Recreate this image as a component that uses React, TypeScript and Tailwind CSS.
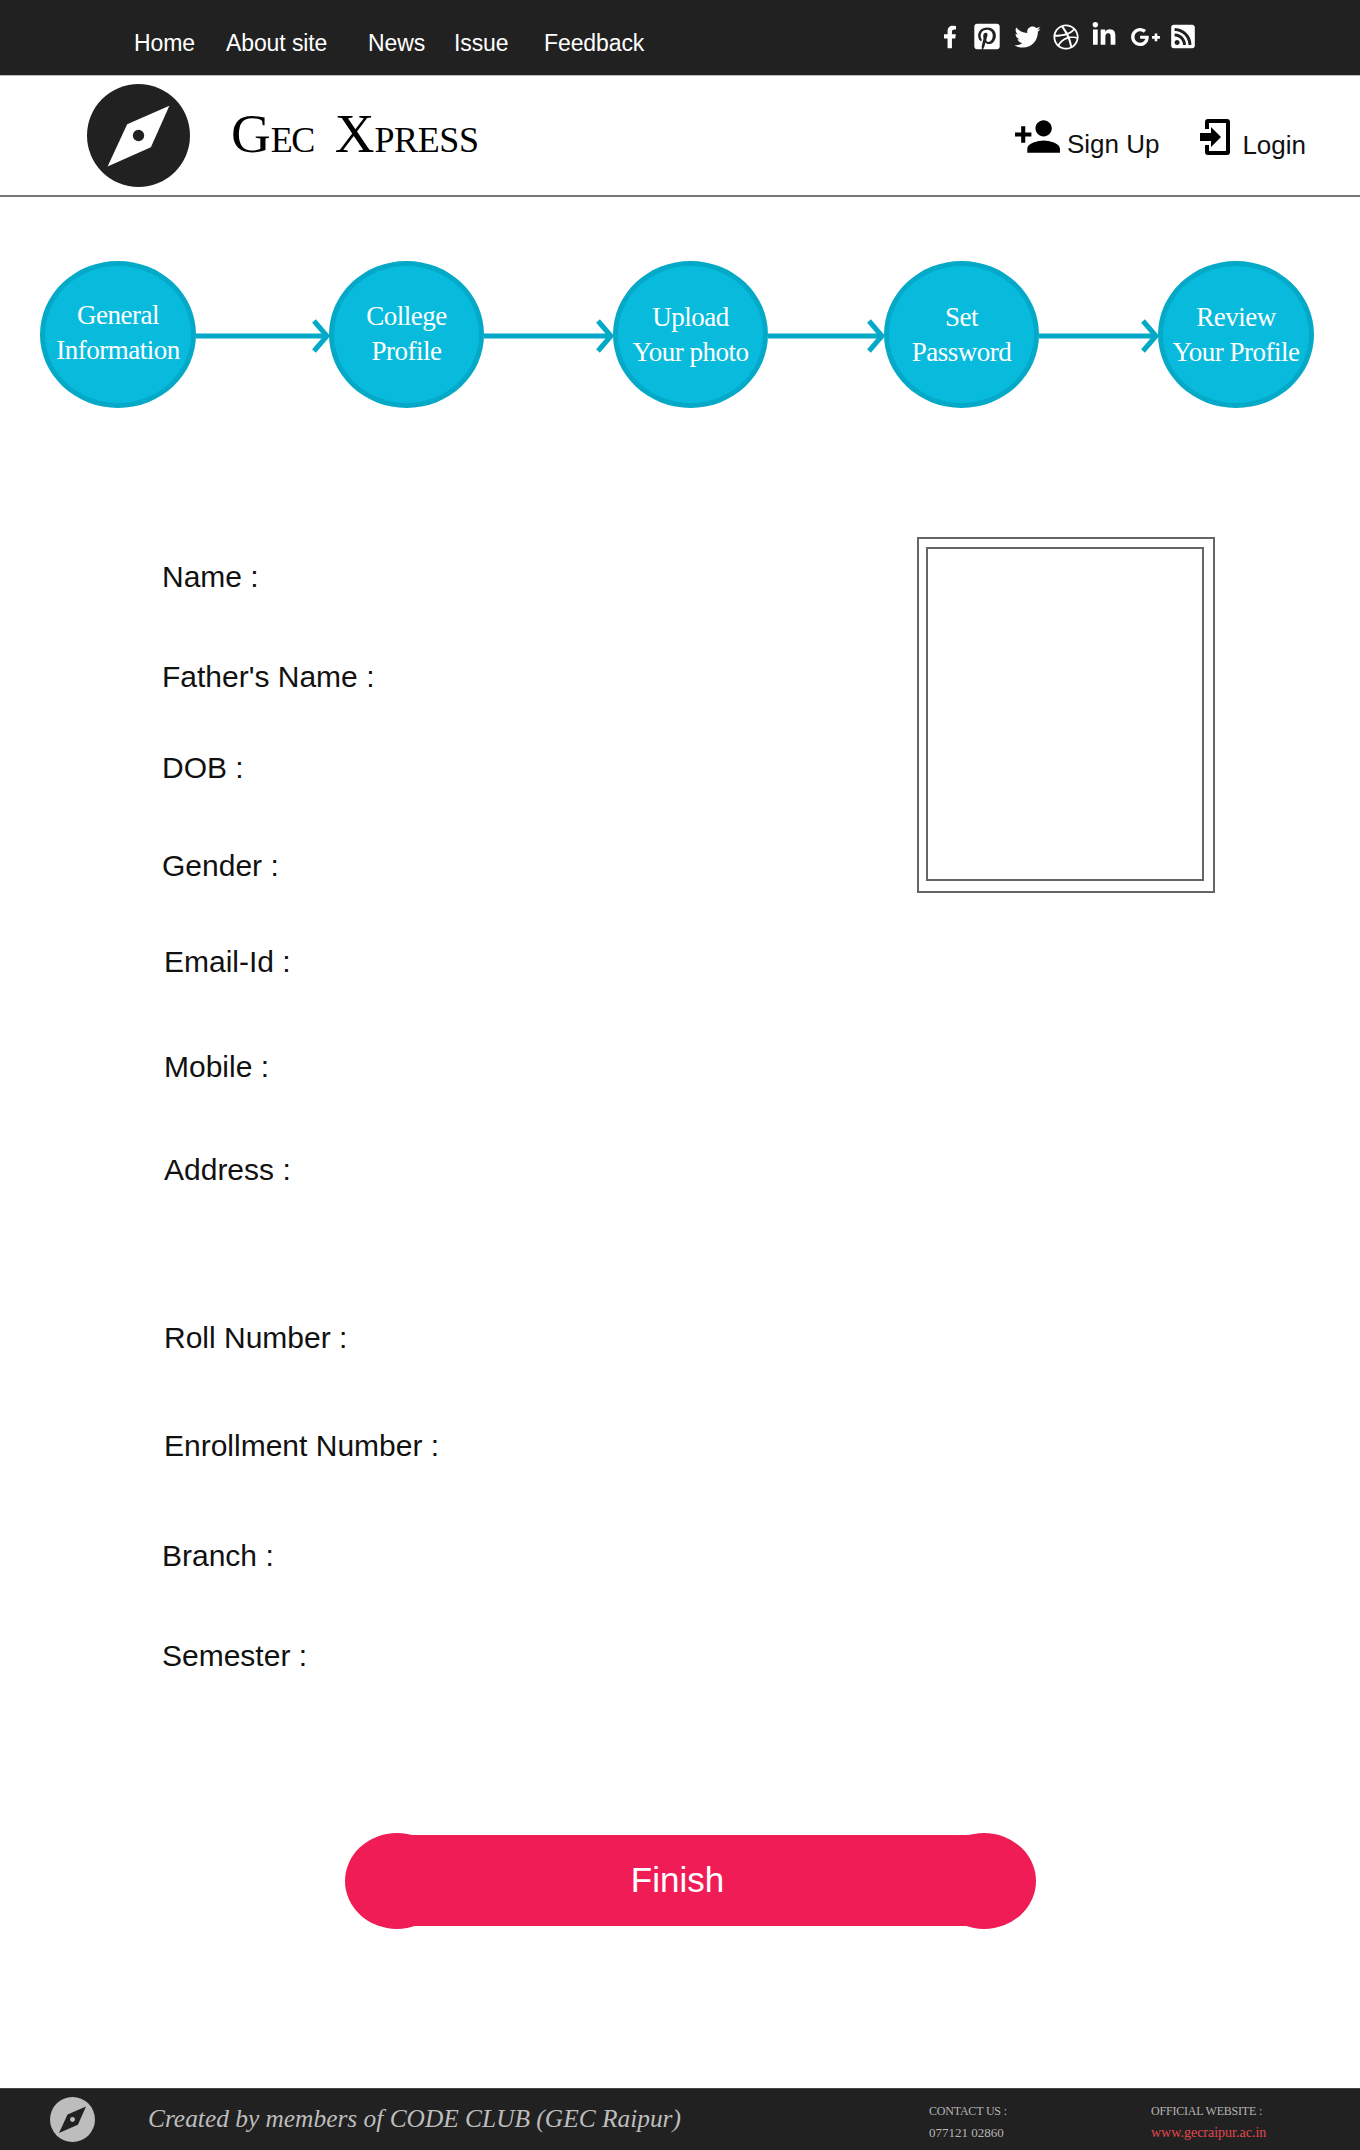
import React from "react";
import { FaDribbble, FaFacebookF, FaGooglePlusG, FaLinkedinIn, FaPinterestSquare, FaRssSquare, FaTwitter } from "react-icons/fa";
import { MdPersonAdd } from "react-icons/md";

function Compass({ bg, fg, className }: { bg: string; fg: string; className: string }) {
  return (
    <svg viewBox="0 0 100 100" preserveAspectRatio="none" className={className}>
      <ellipse cx="50" cy="50" rx="50" ry="50" fill={bg} />
      <polygon points="80,21 62,61.5 20,80 39,39" fill={fg} />
      <ellipse cx="50" cy="50" rx="5.5" ry="5.5" fill={bg} />
    </svg>
  );
}

function Step({ top, bottom, className }: { top: string; bottom: string; className: string }) {
  return (
    <div className={`flex h-[147px] shrink-0 flex-col items-center justify-center rounded-[50%] border-[5px] border-[#03a9c7] bg-[#08bbdd] font-['Liberation_Serif',serif] text-[27px] leading-[35px] tracking-[-0.5px] text-white ${className}`}>
      <span>{top}</span>
      <span>{bottom}</span>
    </div>
  );
}

function Arrow({ className, w }: { className: string; w: number }) {
  return (
    <svg viewBox={`0 0 ${w} 36`} className={className}>
      <line x1="0" y1="18" x2={w - 3} y2="18" stroke="#03a9c7" strokeWidth="5" />
      <polyline points={`${w - 15},3 ${w - 2},18 ${w - 15},33`} fill="none" stroke="#03a9c7" strokeWidth="5" />
    </svg>
  );
}

function Field({ label, className }: { label: string; className: string }) {
  return <div className={`h-[34px] text-[30px] leading-[34px] text-[#111] ${className}`}>{label}</div>;
}

export default function App() {
  return (
    <div className="flex h-[2150px] w-[1360px] flex-col overflow-hidden bg-white font-['Liberation_Sans',Arial,sans-serif]">
      {/* top nav */}
      <div className="flex h-[76px] shrink-0 border-b border-[#bdbdbd] bg-[#212121] text-white">
        <nav className="mt-[27px] flex h-[32px] w-[650px] shrink-0 whitespace-nowrap pl-[134px] text-[23px] leading-[32px] tracking-[-0.1px]">
          <a className="w-[92px]">Home</a>
          <a className="w-[142px]">About site</a>
          <a className="w-[86px]">News</a>
          <a className="w-[90px]">Issue</a>
          <a>Feedback</a>
        </nav>
        <div className="ml-[293px] mt-[24px] flex h-[25px] items-center">
          <FaFacebookF className="h-[24px] w-[14px]" />
          <FaPinterestSquare className="ml-[17px] h-[29px] w-[26px]" />
          <FaTwitter className="ml-[14px] h-[26px] w-[27px]" />
          <FaDribbble className="ml-[12px] h-[26px] w-[26px]" />
          <FaLinkedinIn className="ml-[12px] h-[26px] w-[26px] -translate-y-[2px]" />
          <FaGooglePlusG className="ml-[13px] h-[24px] w-[31px]" />
          <FaRssSquare className="ml-[10px] h-[27px] w-[24px]" />
        </div>
      </div>

      {/* logo bar */}
      <div className="flex h-[121px] shrink-0 items-start border-b-2 border-[#777]">
        <Compass bg="#212121" fg="#ffffff" className="ml-[87px] mt-[8px] h-[103px] w-[103px]" />
        <div className="ml-[41px] mt-[27px] whitespace-nowrap font-['Liberation_Serif',serif] leading-[62px] text-black">
          <span className="text-[55px]">G</span>
          <span className="text-[36px] tracking-[-1.5px]">EC</span>
          <span className="ml-[21px] text-[55px]">X</span>
          <span className="text-[36px] tracking-[-0.4px]">PRESS</span>
        </div>
        <div className="ml-auto mt-[44px] flex items-start pr-[54px] text-[26px] leading-[32px] text-[#111]">
          <MdPersonAdd className="h-[49px] w-[49px] -translate-y-[8px] text-black" />
          <span className="ml-[5px] mt-[8px]">Sign Up</span>
          <svg viewBox="0 0 30 36" className="ml-[41px] h-[36px] w-[30px] -translate-y-[1px]">
            <path d="M7 10V3a1 1 0 0 1 1-1h19a1 1 0 0 1 1 1v30a1 1 0 0 1-1 1H8a1 1 0 0 1-1-1v-7" fill="none" stroke="#000" strokeWidth="4" />
            <path d="M0 14h11V8l10 10-10 10v-6H0z" fill="#000" />
          </svg>
          <span className="ml-[12px] mt-[9px]">Login</span>
        </div>
      </div>

      {/* steps */}
      <div className="mt-[64px] flex h-[147px] shrink-0 items-center pl-[40px]">
        <Step top="General" bottom="Information" className="w-[156px] pb-[3px]" />
        <Arrow w={133} className="h-[36px] w-[133px] shrink-0 translate-y-[1px]" />
        <Step top="College" bottom="Profile" className="w-[155px] pb-[1px]" />
        <Arrow w={129} className="h-[36px] w-[129px] shrink-0 translate-y-[1px]" />
        <Step top="Upload" bottom="Your photo" className="w-[155px]" />
        <Arrow w={116} className="h-[36px] w-[116px] shrink-0 translate-y-[1px]" />
        <Step top="Set" bottom="Password" className="w-[155px]" />
        <Arrow w={119} className="h-[36px] w-[119px] shrink-0 translate-y-[1px]" />
        <Step top="Review" bottom="Your Profile" className="w-[156px]" />
      </div>

      {/* form */}
      <div className="flex shrink-0">
        <div className="w-[917px] shrink-0 pl-[162px] pt-[152px]">
          <Field label="Name :" className="" />
          <Field label="Father's Name :" className="mt-[66px]" />
          <Field label="DOB :" className="mt-[57px]" />
          <Field label="Gender :" className="mt-[64px]" />
          <Field label="Email-Id :" className="ml-[2px] mt-[62px]" />
          <Field label="Mobile :" className="ml-[2px] mt-[71px]" />
          <Field label="Address :" className="ml-[2px] mt-[69px]" />
          <Field label="Roll Number :" className="ml-[2px] mt-[134px]" />
          <Field label="Enrollment Number :" className="ml-[2px] mt-[74px]" />
          <Field label="Branch :" className="mt-[76px]" />
          <Field label="Semester :" className="mt-[66px]" />
        </div>
        <div className="mt-[129px] h-[356px] w-[298px] border-2 border-[#666] pb-[10px] pl-[7px] pr-[9px] pt-[8px]">
          <div className="h-full w-full border-2 border-[#666]" />
        </div>
      </div>

      {/* finish button */}
      <div className="ml-[345px] mt-[159px] flex h-[97px] w-[691px] shrink-0 items-center">
        <div className="h-[96px] w-[104px] shrink-0 rounded-[50%] bg-[#ef1c55]" />
        <button className="-mx-[52px] h-[91px] flex-1 bg-[#ef1c55] pr-[26px] text-[35px] text-white">Finish</button>
        <div className="h-[96px] w-[104px] shrink-0 rounded-[50%] bg-[#ef1c55]" />
      </div>

      {/* footer */}
      <div className="mt-[159px] flex h-[62px] shrink-0 border-t border-[#444] bg-[#212121] font-['Liberation_Serif',serif]">
        <Compass bg="#bdbdbd" fg="#212121" className="ml-[50px] mt-[8px] h-[45px] w-[45px]" />
        <div className="ml-[53px] mt-[13px] w-[531px] whitespace-nowrap text-[25.4px] italic leading-[32px] text-[#bdbdbd]">
          Created by members of CODE CLUB (GEC Raipur)
        </div>
        <div className="ml-[250px] mt-[11px] w-[222px] text-[13px] leading-[22px] text-[#b5b5b5]">
          <div className="text-[12px] tracking-[-0.2px]">CONTACT US :</div>
          <div>077121 02860</div>
        </div>
        <div className="mt-[11px] text-[14px] leading-[22px] text-[#b5b5b5]">
          <div className="text-[12px] tracking-[-0.2px]">OFFICIAL WEBSITE :</div>
          <div className="text-[#e2474f]">www.gecraipur.ac.in</div>
        </div>
      </div>
    </div>
  );
}
